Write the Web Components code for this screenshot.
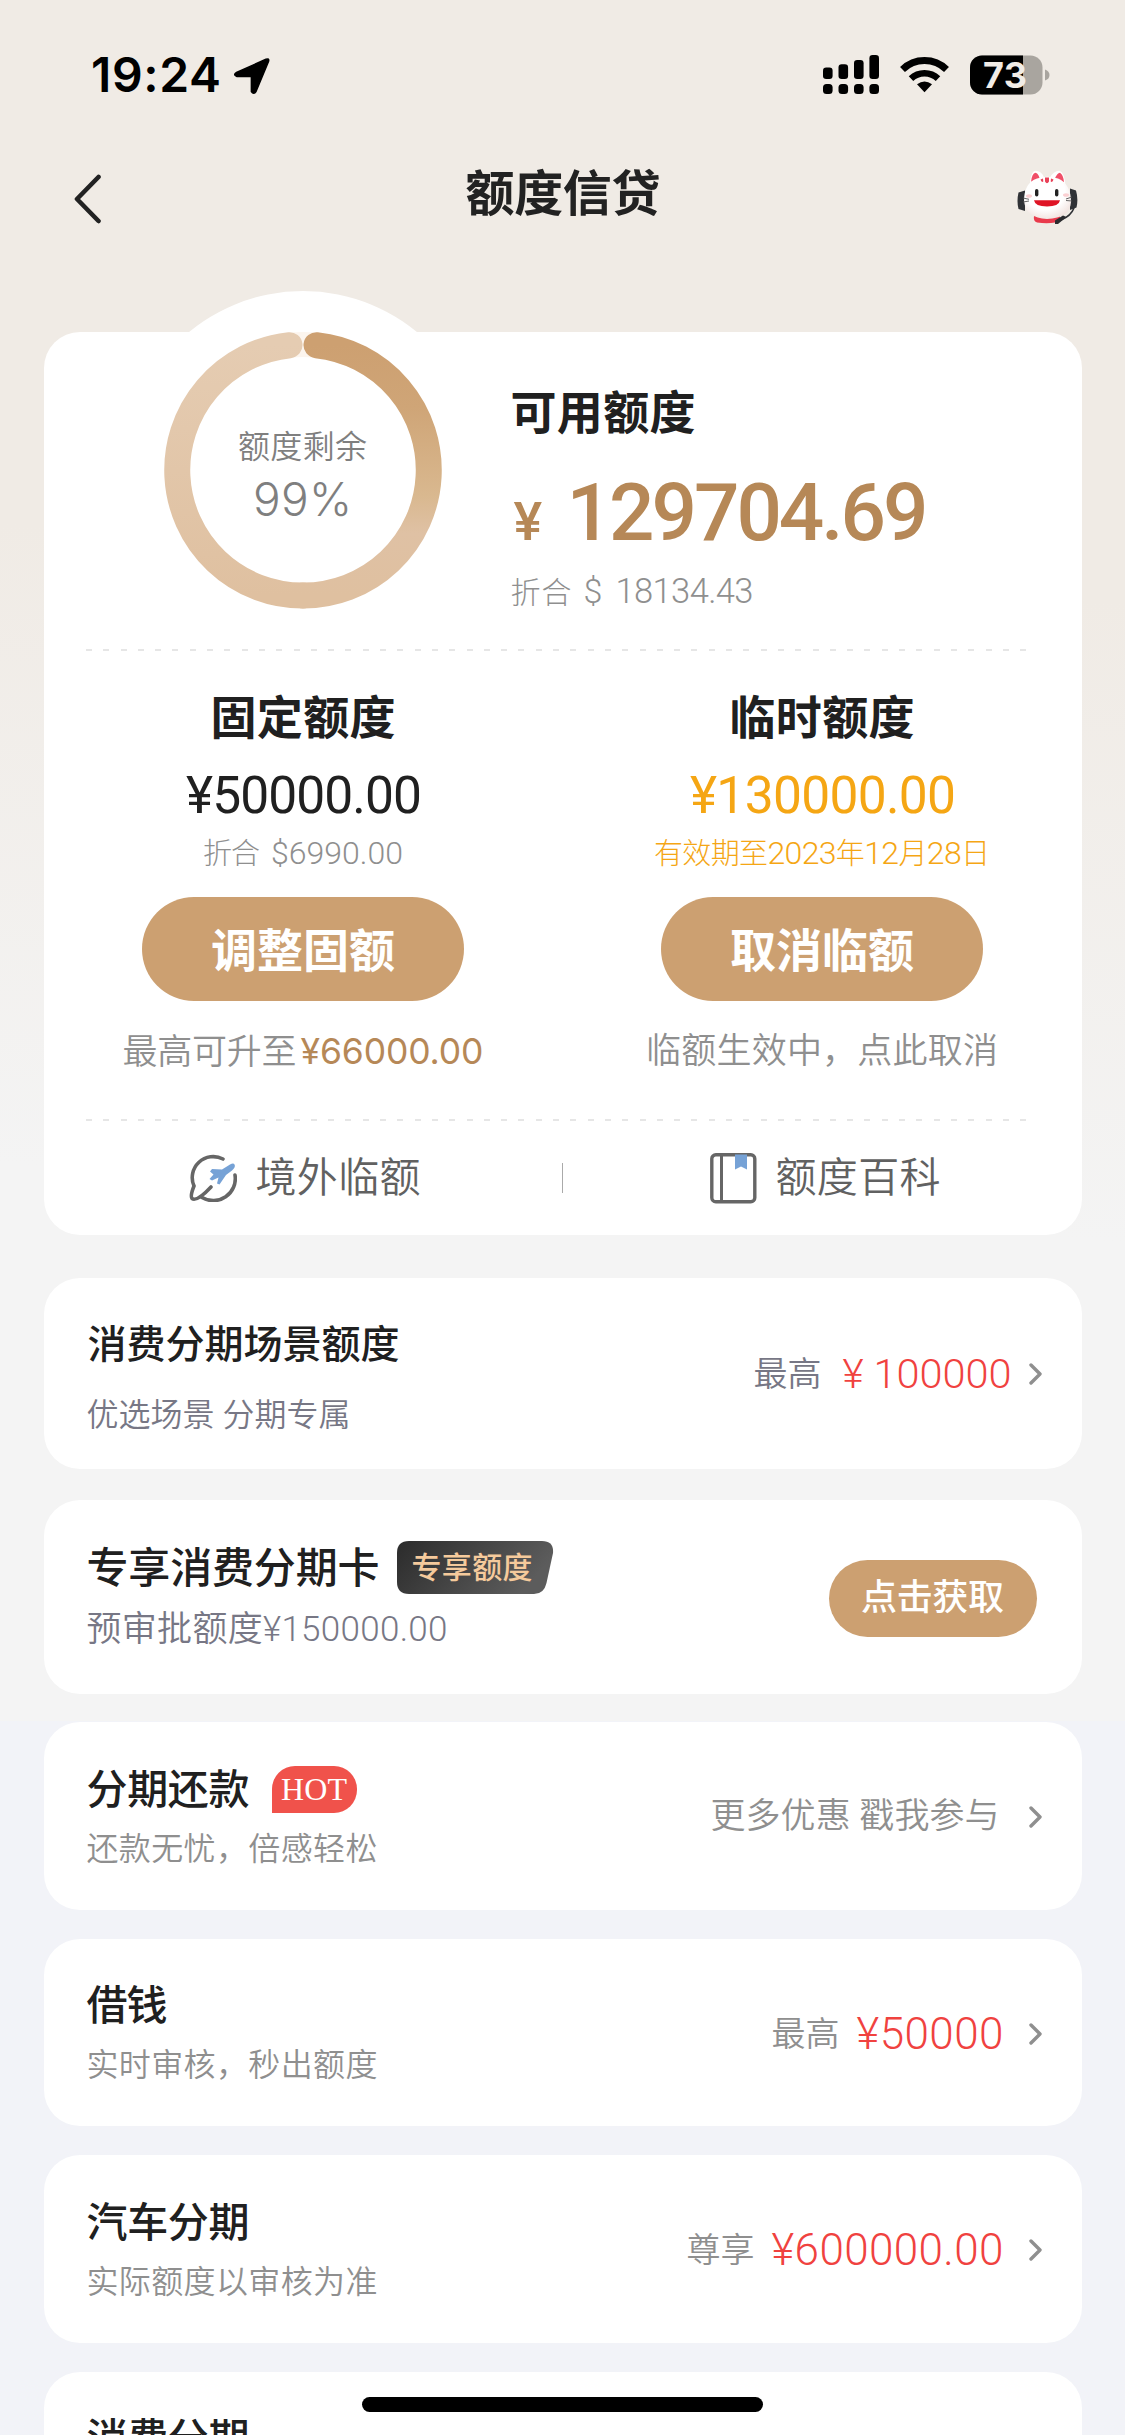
<!DOCTYPE html>
<html lang="zh-CN">
<head>
<meta charset="utf-8">
<title>额度信贷</title>
<style>
html,body{margin:0;padding:0}
body{width:1125px;height:2435px;overflow:hidden;font-family:Roboto,"Noto Sans CJK SC",sans-serif;color:#202020}
</style>
</head>
<body>
<credit-page></credit-page>
<script>
const define=(name,html,after)=>{
  const t=document.createElement('template');t.innerHTML=html;
  customElements.define(name,class extends HTMLElement{
    constructor(){super();this.attachShadow({mode:'open'}).append(t.content.cloneNode(true))}
    connectedCallback(){if(after)after.call(this,this.shadowRoot)}
  });
};

/* Text run with a size (s) and a total advance (w); the tracking is spread between the glyphs. */
define('t-x',`<style>
:host{display:block;flex:none;white-space:pre;line-height:inherit}
span{display:inline-block;white-space:pre}
</style><span><slot></slot></span>`,function(root){
  const s=this.getAttribute('s'),w=+this.getAttribute('w');
  if(s)this.style.fontSize=s+'px';
  if(!w)return;
  const span=root.querySelector('span'),n=this.textContent.length;
  const ls=(w-span.getBoundingClientRect().width)/(n-1);
  this.style.letterSpacing=ls.toFixed(3)+'px';
  this.style.width=w+'px';
});

define('status-bar',`<style>
:host{display:flex;flex:none;height:150px;padding:0 75px 0 91px;box-sizing:border-box;align-items:flex-start;color:#000}
.time{font-family:Inter,sans-serif;font-weight:600;line-height:48px;margin-top:51px}
.loc{margin:57px auto 0 12px}
.bars{margin:55px 21px 0 0}.wifi{margin:56px 21px 0 0}
.bat{display:grid;margin-top:54.500px}.bat>*{grid-area:1/1}
.pct{font-family:Inter,sans-serif;font-weight:700;color:#f1ece6;line-height:40px;margin-left:13px}
svg{display:block;flex:none}
</style>
<t-x class="time" s="48" w="130">19:24</t-x>
<svg class="loc" width="38" height="38" viewBox="0 0 38 38"><path d="M3.500 15.500 33 2.200Q36.500 1 35.500 4.500L23 34.500Q20.500 38 18.400 34.500V20.300Q18.400 19.600 17.600 19.600H4Q-.5 18 3.500 15.500Z" stroke="#000" stroke-width="1.500" stroke-linejoin="round"/></svg>
<svg class="bars" width="56" height="39" viewBox="0 0 56 39"><g><rect y="12.500" width="9.600" height="11.500" rx="3.200"/><rect x="15.500" y="9.300" width="9.600" height="14.700" rx="3.200"/><rect x="31" y="5" width="9.600" height="19" rx="3.200"/><rect x="46.400" width="9.600" height="24" rx="3.200"/><rect y="29" width="9.600" height="10" rx="3.500"/><rect x="15.500" y="29" width="9.600" height="10" rx="3.500"/><rect x="31" y="29" width="9.600" height="10" rx="3.500"/><rect x="46.400" y="29" width="9.600" height="10" rx="3.500"/></g></svg>
<svg class="wifi" width="49" height="37" viewBox="0 0 49 37"><g fill="none" stroke="#000"><path d="M2.500 13.500A31.500 31.500 0 0 1 46.500 13.500" stroke-width="7"/><path d="M11 22.600A19.500 19.500 0 0 1 38 22.600" stroke-width="6.500"/></g><path d="M17 28.300Q24.500 22.500 32 28.300L24.500 36.300Z"/></svg>
<div class="bat"><svg width="80" height="40" viewBox="0 0 80 40"><defs><clipPath id="b"><rect y=".500" width="72.500" height="39" rx="12"/></clipPath></defs><g clip-path="url(#b)"><rect width="73" height="40" fill="#a9a59f"/><rect width="53" height="40"/></g><path d="M75 14.500Q79.500 16 79.500 20T75 25.500Z" fill="#a9a59f"/></svg><t-x class="pct" s="36" w="44">73</t-x></div>`);

define('nav-bar',`<style>
:host{display:flex;flex:none;height:182px;padding:20px 47px 0 74px;box-sizing:border-box;align-items:flex-start;justify-content:space-between}
.t{font-weight:600;line-height:52px;margin:-1px 0 0 7px;color:#222}
svg{display:block}.back{margin-top:4px}
</style>
<svg class="back" width="28" height="50" viewBox="0 0 28 50"><path d="M24.500 3 3 25 24.500 47" fill="none" stroke="#222" stroke-width="4.600" stroke-linecap="round" stroke-linejoin="round"/></svg>
<t-x class="t" s="49" w="195">额度信贷</t-x>
<svg width="61" height="55" viewBox="0 0 61 55">
<defs><radialGradient id="f" cx=".45" cy=".35" r=".7"><stop offset=".6" stop-color="#fff"/><stop offset="1" stop-color="#f0e0dc"/></radialGradient></defs>
<path d="M8 20.500 1.500 22.500Q-.5 31 1.500 39L8 41ZM53 18.500 59 20.500Q61.500 29 59.500 37.500L53 40Z" fill="#303236"/>
<path d="M13 17Q13 1 19 .8 25 1.500 27 7.500H33Q37 .5 42.500 .8 48 3 48.500 17Z" fill="#fff"/>
<path d="M14 12Q15 3 18.500 2.800 22 4 22.800 9.500ZM37.500 9.500Q40 3 43 2.800 46.500 5 47 12.500Z" fill="#f04f68"/>
<path d="M17 46H43Q44 51 38 52.500 30 54 20 52.500 16 51 17 46" fill="#e93a4c"/>
<path d="M7 31Q7 13 20 8.500 30 5 41 8.500 54 14 54 32 53 48 30 49 9 48 7 31" fill="url(#f)"/>
<path d="M28 7.500H32V11.500Q30 15 28 11.500ZM23.500 9.500 26 8.500 26.300 11.500Q24.500 13 23.500 9.500ZM36.500 9.500 34 8.500 33.700 11.500Q35.500 13 36.500 9.500Z" fill="#e94158"/>
<ellipse cx="12" cy="26" rx="3" ry="1.800" fill="#fbd0d2"/><ellipse cx="49" cy="25" rx="3" ry="1.800" fill="#fbd0d2"/>
<rect x="18" y="19" width="3.400" height="7.500" rx="1.700" fill="#222"/><rect x="38" y="19" width="3.400" height="7.500" rx="1.700" fill="#222"/>
<path d="M17 30.300H43Q42 36.500 30 36.500 18 36.500 17 30.300" fill="#df1425"/>
<path d="M6 28 12 29.300M6 32 12 31M55 27 49 29M55 31 49 30.500" stroke="#555" stroke-width=".9"/>
<path d="M57 38Q54 46 44 50" fill="none" stroke="#303236" stroke-width="1.600"/><path d="M38 50.500 46 45.500 49.500 47 41 54H38Z" fill="#2b2c2f"/>
</svg>`);

define('quota-ring',`<style>
:host{display:grid;flex:none;width:358px;height:358px}
svg,.c{grid-area:1/1}svg{display:block}
.c{display:flex;flex-direction:column;align-items:center;justify-content:center;padding-top:6px;line-height:52px;color:#7f7f7f}
.c slot{display:contents}
</style>
<svg width="358" height="358" viewBox="-179 -179 358 358"><defs>
<linearGradient id="r" x1="0" y1="0" x2="0" y2="1"><stop offset="0" stop-color="#cda071"/><stop offset=".25" stop-color="#cfa577"/><stop offset=".6" stop-color="#d9b88f"/><stop offset=".75" stop-color="#dfc1a4"/><stop offset="1" stop-color="#dfc0a0"/></linearGradient>
<linearGradient id="l" x1="0" y1="0" x2="0" y2="1"><stop offset="0" stop-color="#e5ccb2"/><stop offset="1" stop-color="#dfc0a0"/></linearGradient></defs>
<circle r="179" fill="#fff"/><circle r="125.500" fill="none" stroke="#fcf5ee" stroke-width="25"/>
<g fill="none" stroke-width="26" stroke-linecap="round"><path d="M-13.500-124.800A125.500 125.500 0 0 0 0 125.500" stroke="url(#l)"/><path d="M13.500-124.800A125.500 125.500 0 0 1 0 125.500" stroke="url(#r)"/></g></svg>
<div class="c"><slot></slot></div>`);

define('pill-button',`<style>
:host{display:flex;align-items:center;justify-content:center;width:322px;height:104px;border-radius:52px;background:#cca071;color:#fff;font-weight:600;flex:none;padding-bottom:4px;box-sizing:border-box}
:host([small]){width:208px;height:77px;border-radius:39px;font-weight:500;margin-top:3px;padding-bottom:0}
</style><slot></slot>`);

define('dash-line',`<style>
:host{display:block;height:2px;margin:0 52px 0 42px;background:repeating-linear-gradient(90deg,#e6e6e6 0 6px,transparent 6px 17.300px)}
</style>`);

define('quota-column',`<style>
:host{display:flex;flex-direction:column;align-items:center;width:50%;box-sizing:border-box;padding-top:42px}
.t{font-weight:600;line-height:50px}.a{line-height:50px;margin-top:28px;font-weight:400;padding-left:2px}
.s{display:flex;align-items:baseline;line-height:36px;height:36px;margin-top:14px;font-weight:300}
.b{margin-top:26px}.h{display:flex;align-items:baseline;line-height:40px;height:40px;margin-top:31px;font-weight:350;color:#8f8f8f}
</style><div class="t"><slot name="title"></slot></div><div class="a"><slot name="amount"></slot></div><div class="s"><slot name="sub"></slot></div><div class="b"><slot name="button"></slot></div><div class="h"><slot name="hint"></slot></div>`);

define('link-item',`<style>
:host{display:flex;width:50%;box-sizing:border-box;align-items:center;justify-content:center;gap:19px;line-height:46px;color:#616161;font-weight:350}
</style><slot></slot>`);

define('offer-card',`<style>
:host{display:flex;flex:none;justify-content:space-between;height:187.500px;margin-bottom:29px;background:#fff;border-radius:36px;padding:0 40px 0 43px;box-sizing:border-box;--pt:43.500px;--th:48px;--gap:15px}
.l{padding-top:var(--pt)}.t{display:flex;align-items:center;height:var(--th);line-height:var(--th);font-weight:500;color:#202020}
.s{display:flex;margin-top:var(--gap);line-height:40px;font-weight:350;color:var(--sub,#8f8f8f)}
.r{display:flex;align-items:center;line-height:50px;font-weight:350;color:var(--sub,#8f8f8f);padding-top:var(--rp,3px)}
svg{display:block;margin-left:var(--cg,25px)}:host([plain]) svg{display:none}
</style><div class="l"><div class="t"><slot name="title"></slot></div><div class="s"><slot name="sub"></slot></div></div>
<div class="r"><slot name="right"></slot><svg width="13" height="22" viewBox="0 0 13 22"><path d="M2 2 11 11 2 20" fill="none" stroke="#8f8f8f" stroke-width="3.400" stroke-linecap="round" stroke-linejoin="round"/></svg></div>`);

define('vip-badge',`<style>
:host{display:grid;width:157px;height:53px;margin:-2px 0 0 17px;color:#f5ca9c;font-weight:500;line-height:53px}
svg,div{grid-area:1/1}svg{display:block}div{padding-left:15px}
</style><svg width="157" height="53" viewBox="0 0 157 53"><defs><linearGradient id="g" x1="0" y1="0" x2="1" y2=".3"><stop stop-color="#2b2b2b"/><stop offset="1" stop-color="#5c5c5c"/></linearGradient></defs><path d="M12 0H145Q157 0 156 12L149.500 42Q147 53 137 53H12Q0 53 0 41V12Q0 0 12 0Z" fill="url(#g)"/></svg><div><slot></slot></div>`);

define('hot-badge',`<style>
:host{display:flex;justify-content:center;width:85px;height:47px;margin:-1px 0 0 22px;border-radius:23px 23px 23px 0;background:#f0524b;color:#fff;font:400 32px/47px "Liberation Serif",serif;box-sizing:border-box}
</style><slot></slot>`);

define('credit-page',`<style>
:host{display:flex;flex-direction:column;width:1125px;height:2435px;overflow:hidden;background:linear-gradient(184deg,#f0ebe5 0 600px,#f4f4f4 1240px) 0 0/1125px 1721px no-repeat,#f2f3f8}
main{display:flex;flex-direction:column;padding:0 43.500px}
.quota{display:flex;flex:none;flex-direction:column;height:903px;border-radius:36px;background:#fff;margin-bottom:43px}
.hero{display:flex;height:317px}.hero quota-ring{margin:-41px 29px 0 80px}
.info{display:flex;flex-direction:column}
.info .h{font-weight:600;line-height:50px;margin-top:56px}
.amt{display:flex;align-items:baseline;height:80px;line-height:80px;margin-top:35px;color:#b68857;font-weight:500}
.usd{display:flex;align-items:baseline;height:40px;line-height:40px;margin-top:18px;color:#8f8f8f;font-weight:300}
.cols{display:flex;height:468px}
.links{display:flex;height:114px;align-items:center}
.links i{width:1.500px;height:30px;background:#aaa;margin:0 -.75px}
.gold{color:#b68857;font-family:Inter}.inter{font-family:Inter}.orange{color:#f5a614}.red{color:#f0423f}
.home{position:absolute;left:362px;top:2397px;width:401px;height:15px;border-radius:8px;background:#000}
svg{display:block}
</style>
<status-bar></status-bar><nav-bar></nav-bar>
<main>
<section class="quota">
 <div class="hero"><quota-ring><t-x s="32" w="129" style="font-weight:350">额度剩余</t-x><t-x class="inter" s="46" w="99" style="font-weight:350">99%</t-x></quota-ring>
 <div class="info"><t-x class="h" s="46" w="185">可用额度</t-x>
 <div class="amt"><t-x s="54" style="margin-left:3px;width:53px">¥</t-x><t-x s="80" w="362">129704.69</t-x></div>
 <div class="usd"><t-x s="30" w="61">折合</t-x><t-x s="34" style="margin-left:12px;width:32px;font-weight:350">$</t-x><t-x s="34.500" w="138" style="font-weight:350">18134.43</t-x></div></div></div>
 <dash-line></dash-line>
 <div class="cols">
 <quota-column><t-x slot="title" s="46" w="185">固定额度</t-x><t-x slot="amount" s="51.500" w="236">¥50000.00</t-x><t-x slot="sub" s="29" w="57" style="color:#8f8f8f">折合</t-x><t-x slot="sub" s="32" w="132" style="margin-left:11px;color:#8f8f8f;font-weight:350">$6990.00</t-x><pill-button slot="button"><t-x s="46" w="184">调整固额</t-x></pill-button><t-x slot="hint" s="35" w="174">最高可升至</t-x><t-x slot="hint" class="gold" s="35.500" w="183" style="margin-left:4px;font-weight:400">¥66000.00</t-x></quota-column>
 <quota-column><t-x slot="title" s="46" w="185">临时额度</t-x><t-x slot="amount" class="orange" s="51.500" w="266">¥130000.00</t-x><t-x slot="sub" class="orange" s="29" w="336">有效期至<span style="font-size:32px;font-weight:350">2023</span>年<span style="font-size:32px;font-weight:350">12</span>月<span style="font-size:32px;font-weight:350">28</span>日</t-x><pill-button slot="button"><t-x s="46" w="184">取消临额</t-x></pill-button><t-x slot="hint" s="35" w="352">临额生效中，点此取消</t-x></quota-column>
 </div>
 <dash-line></dash-line>
 <div class="links">
 <link-item style="padding-left:3px"><svg width="48" height="48" viewBox="0 0 48 48"><path d="M34 5A21 21 0 0 0 5 32M46 21A22 22 0 0 1 13 43.500M5 32Q1 42 3 44.500 8 48 22 33" fill="none" stroke="#666" stroke-width="3.600" stroke-linecap="round"/><path d="M45.500 10.500Q47 13 43 16.500L37 21 30.500 30.500 28 29.500 29.500 23.500 23 26.500 20.500 25 24.500 20.500 21 17.500 23 15 33 15.500 41 10.500Q44.500 8.500 45.500 10.500Z" fill="#76a2d6"/></svg><t-x s="41" w="165">境外临额</t-x></link-item><i></i>
 <link-item style="padding-left:6px"><svg width="47" height="51" viewBox="0 0 47 51"><rect x="1.800" y="1.800" width="43" height="47" rx="4" fill="none" stroke="#666" stroke-width="3.400"/><path d="M11.500 2V49" stroke="#666" stroke-width="3"/><path d="M25 1.500H37V16.500L31 13.500 25 16.500Z" fill="#76a2d6"/></svg><t-x s="41" w="165">额度百科</t-x></link-item>
 </div>
</section>
<offer-card style="height:191px;margin-bottom:31px;--pt:45px;--th:44px;--gap:28px;--sub:#777785;--cg:17px;--rp:1px"><t-x slot="title" s="39" w="312" style="margin-left:1px">消费分期场景额度</t-x><t-x slot="sub" s="32" w="264">优选场景 分期专属</t-x><t-x slot="right" s="34" w="68">最高</t-x><t-x slot="right" class="red" s="41" style="width:31px;margin-left:21px">¥</t-x><t-x slot="right" class="red" s="41.500" w="138">100000</t-x></offer-card>
<offer-card plain style="height:193.500px;margin-bottom:28.500px;padding-right:45px;--rp:0px;--pt:42px;--th:53px;--gap:15px;--sub:#777785"><t-x slot="title" s="42" w="293">专享消费分期卡</t-x><vip-badge slot="title"><t-x s="30" w="121">专享额度</t-x></vip-badge><t-x slot="sub" s="35" w="361">预审批额度¥150000.00</t-x><pill-button small slot="right"><t-x s="36" w="143">点击获取</t-x></pill-button></offer-card>
<offer-card style="--cg:29px"><t-x slot="title" s="41" w="163">分期还款</t-x><hot-badge slot="title"><t-x s="32" w="66">HOT</t-x></hot-badge><t-x slot="sub" s="32" w="291">还款无忧，倍感轻松</t-x><t-x slot="right" s="35" w="289">更多优惠 戳我参与</t-x></offer-card>
<offer-card><t-x slot="title" s="41" w="81">借钱</t-x><t-x slot="sub" s="32" w="291">实时审核，秒出额度</t-x><t-x slot="right" s="34" w="68">最高</t-x><t-x slot="right" class="red" s="44" w="147" style="margin-left:17px">¥50000</t-x></offer-card>
<offer-card><t-x slot="title" s="41" w="163">汽车分期</t-x><t-x slot="sub" s="32" w="291">实际额度以审核为准</t-x><t-x slot="right" s="34" w="68">尊享</t-x><t-x slot="right" class="red" s="44" w="232" style="margin-left:17px">¥600000.00</t-x></offer-card>
<offer-card plain><t-x slot="title" s="41" w="163">消费分期</t-x></offer-card>
</main>
<div class="home"></div>`);
</script>
</body>
</html>
